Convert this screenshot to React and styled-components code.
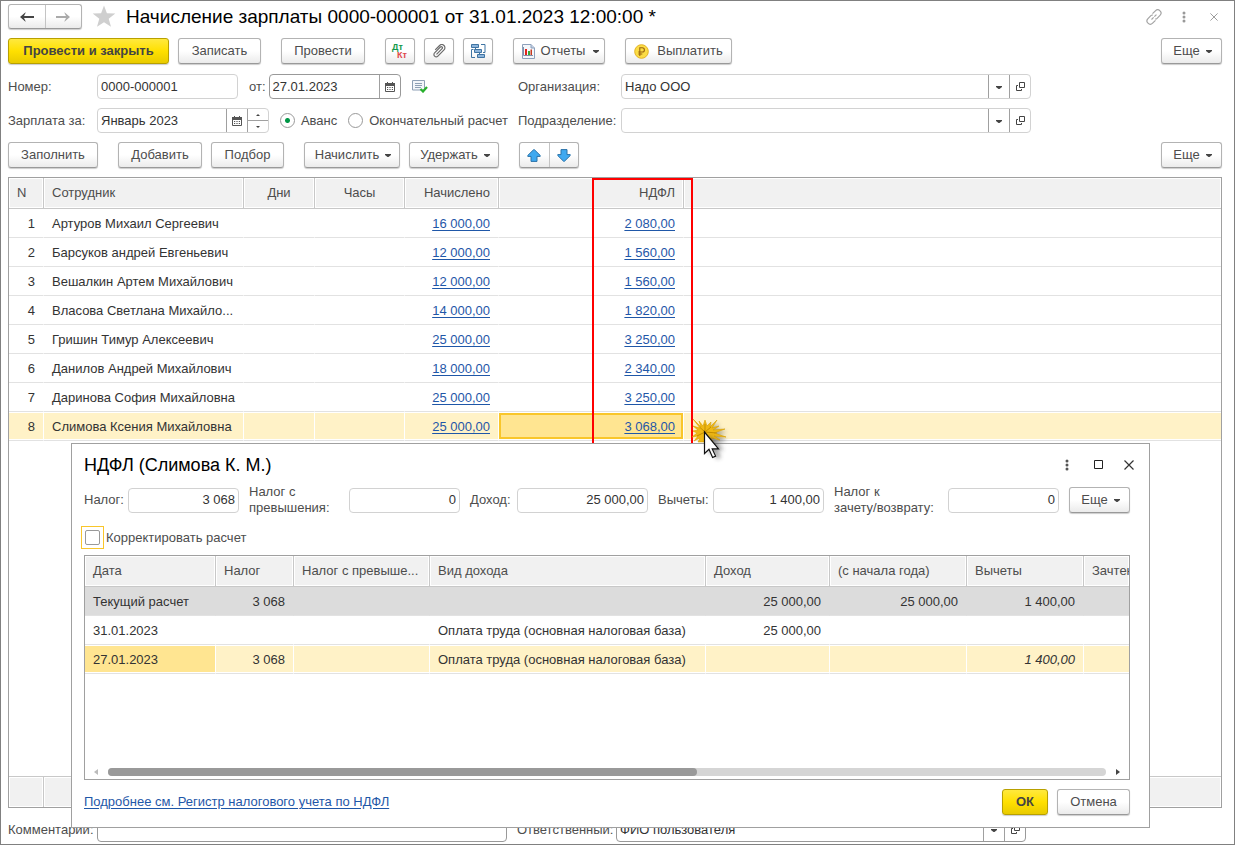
import React from "react"
import styled, { createGlobalStyle, css } from "styled-components"

const employees = [
  { name: "Артуров Михаил Сергеевич", accrued: "16 000,00", tax: "2 080,00" },
  { name: "Барсуков андрей Евгеньевич", accrued: "12 000,00", tax: "1 560,00" },
  { name: "Вешалкин Артем Михайлович", accrued: "12 000,00", tax: "1 560,00" },
  { name: "Власова Светлана Михайло...", accrued: "14 000,00", tax: "1 820,00" },
  { name: "Гришин Тимур Алексеевич", accrued: "25 000,00", tax: "3 250,00" },
  { name: "Данилов Андрей Михайлович", accrued: "18 000,00", tax: "2 340,00" },
  { name: "Даринова София Михайловна", accrued: "25 000,00", tax: "3 250,00" },
  {
    name: "Слимова Ксения Михайловна",
    accrued: "25 000,00",
    tax: "3 068,00",
    selected: true,
  },
]

const Caret = () => (
  <svg width="6" height="6" viewBox="0 0 6 6" aria-hidden="true">
    <path d="M0 2h6v1L3.500 5h-1L0 3z" fill="#444" />
  </svg>
)

const Arrow = ({ flip, color }) => (
  <svg width="14" height="10" viewBox="0 0 14 10" aria-hidden="true">
    <path
      d={
        flip
          ? "M14 5L8.500.3V1l1.500 3H0v2h10L8.500 9v.7z"
          : "M0 5L5.500.3V1L4 4h10v2H4l1.500 3v.7z"
      }
      fill={color}
    />
  </svg>
)

const Star = () => (
  <svg width="24" height="23" viewBox="0 0 24 23" aria-hidden="true">
    <path
      d="M12 .5l2.900 7.800 8.400.3-6.600 5.100 2.300 8.100-7-4.600-7 4.600 2.300-8.100L.7 8.600l8.400-.3z"
      fill="#cfcfcf"
    />
  </svg>
)

const LinkIcon = () => (
  <svg width="16" height="16" viewBox="0 0 16 16" aria-hidden="true">
    <g fill="none" stroke="#a3a3a3" strokeWidth="1.200">
      <path d="M6.500 4.700l2.900-2.900a3.100 3.100 0 0 1 4.600 4.600l-2.900 2.900c-.5.5-1.300.8-2 .6" />
      <path d="M9.500 11.300l-2.900 2.900A3.100 3.100 0 0 1 2 9.600l2.900-2.900c.5-.5 1.300-.8 2-.6" />
      <path d="M5.500 10.500l5-5" strokeDasharray="3 1" />
    </g>
  </svg>
)

const Dots = ({ color }) => (
  <svg width="4" height="12" viewBox="0 0 4 12" aria-hidden="true">
    <g fill={color}>
      <circle cx="2" cy="2" r="1.500" />
      <circle cx="2" cy="6" r="1.500" />
      <circle cx="2" cy="10" r="1.500" />
    </g>
  </svg>
)

const Cross = ({ size, color }) => (
  <svg width={size} height={size} viewBox="0 0 10 10" aria-hidden="true">
    <path d="M.5.5l9 9M9.500.5l-9 9" stroke={color} strokeWidth="1.200" />
  </svg>
)

const Square = () => (
  <svg width="9" height="9" viewBox="0 0 9 9" aria-hidden="true">
    <path d="M.5.5h8v8h-8z" fill="none" stroke="#222" />
  </svg>
)

const DebitCredit = () => (
  <svg width="18" height="18" viewBox="0 0 18 18" aria-hidden="true">
    <g fontFamily="Liberation Sans, sans-serif" fontSize="9" fontWeight="700">
      <text x="1" y="8" fill="#12994b">
        Дт
      </text>
      <text x="6" y="16" fill="#e0484a">
        Кт
      </text>
    </g>
  </svg>
)

const Clip = () => (
  <svg width="14" height="14" viewBox="0 0 14 14" aria-hidden="true">
    <path
      d="M4.500 10.300l5.600-5.600a1.200 1.200 0 0 0-1.700-1.700L2.600 8.800a2.300 2.300 0 0 0 3.300 3.300l6.100-6.200a3.100 3.100 0 0 0-4.400-4.400L3.200 5.900"
      fill="none"
      stroke="#6b6b6b"
      strokeWidth="1.200"
    />
  </svg>
)

const Structure = () => (
  <svg width="15" height="15" viewBox="0 0 15 15" aria-hidden="true">
    <g fill="#8db4da" stroke="#3f74a3">
      <path d="M.5.5h7v3h-7zM3.500 5.500h7v3h-7zM6.500 10.500h7v3h-7z" />
      <path
        d="M4.500 3.500v2M8.500 8.500v2M10 .5h4v8h-2M4 13.500H.5v-8h2"
        fill="none"
      />
    </g>
  </svg>
)

const Report = () => (
  <svg width="14" height="15" viewBox="0 0 14 15" aria-hidden="true">
    <path d="M1.500.5H10L13.500 4v10.500h-12z" fill="#f4f7fb" stroke="#8da0bb" />
    <path d="M10 .5V4h3.500" fill="#c3d0e4" stroke="#8da0bb" />
    <path d="M2.500 3v8.500H12" fill="none" stroke="#7f8fa8" />
    <path d="M4 5h2v6H4z" fill="#e3231c" />
    <path d="M7 7h2v4H7z" fill="#38a838" />
    <path d="M9.500 5.500H11V11H9.500z" fill="#c8391f" />
  </svg>
)

const Ruble = () => (
  <svg width="15" height="15" viewBox="0 0 15 15" aria-hidden="true">
    <circle cx="7.500" cy="7.500" r="6.800" fill="#fbdc45" stroke="#e3b224" />
    <path
      d="M5.800 12V3.800h2.500a2.100 2.100 0 0 1 0 4.200H4.300M4.300 10h4"
      fill="none"
      stroke="#9a6410"
      strokeWidth="1.100"
    />
  </svg>
)

const BlueArrow = ({ down }) => (
  <svg width="14" height="13" viewBox="0 0 14 13" aria-hidden="true">
    <path
      d={
        down
          ? "M4 .6h6v5h3.200v1L7.500 12.200h-1L.8 6.600v-1H4z"
          : "M4 12.400h6v-5h3.200v-1L7.500.8h-1L.8 6.400v1H4z"
      }
      fill="#3fa9f0"
      stroke="#2a72a8"
    />
  </svg>
)

const Calendar = () => (
  <svg width="10" height="10" viewBox="0 0 10 10" aria-hidden="true">
    <path d="M.5 1.500h9v8h-9z" fill="#fff" stroke="#555" />
    <path d="M0 1h10v3H0zM2 0h1v2H2zM7 0h1v2H7z" fill="#555" />
    <path
      d="M2 5.500h1.200M4.400 5.500h1.200M6.800 5.500H8M2 7.500h1.200M4.400 7.500h1.200M6.800 7.500H8"
      stroke="#555"
    />
  </svg>
)

const OpenIcon = () => (
  <svg width="9" height="9" viewBox="0 0 9 9" aria-hidden="true">
    <path d="M3.500.5h5v5h-5z" fill="none" stroke="#444" />
    <path d="M2 3.500H.5v5h5V7" fill="none" stroke="#444" />
  </svg>
)

const ListCheck = () => (
  <svg width="16" height="13" viewBox="0 0 16 13" aria-hidden="true">
    <path d="M.5.500h12v9.500H.5z" fill="#f3f6fa" stroke="#8ea0b5" />
    <path d="M3 3.500h7M3 5.500h7M3 7.500h6" stroke="#8ea0b5" />
    <path
      d="M8.500 9l2.500 2.500L15 7"
      fill="none"
      stroke="#27b02c"
      strokeWidth="2.200"
    />
  </svg>
)

const ClickPointer = () => (
  <svg width="44" height="50" viewBox="0 0 44 50" aria-hidden="true">
    <defs>
      <filter id="shade" x="-50%" y="-50%" width="200%" height="200%">
        <feGaussianBlur stdDeviation="2" />
      </filter>
    </defs>
    <path
      d="M16 8l12-2-5 5 12 3-9 3 9 5-8 3H14z"
      fill="#555"
      opacity=".5"
      filter="url(#shade)"
    />
    <path
      d="M1 1l8 8-2-6 4 5 2-6 2 6 4-4-1 5 7-7-5 8 7-2-6 4 12-1-11 4 12 4-12-1 6 4-9-2 2 4H6l2-4-6 3 4-5-6 1 5-4-4-2 5-1-5-4 7 2z"
      fill="#efb814"
      stroke="#d9a000"
      strokeWidth=".6"
    />
    <path d="M13 14L8 9.500M13 14v-8M13 14l6-5M13 14l-8 4M13 14l12 1" stroke="#c48f00" />
    <path
      d="M17 17v20l4-4 4 8 4-2-4-7h7z"
      fill="#333"
      opacity=".5"
      filter="url(#shade)"
    />
    <path
      d="M12.500 14v21.500l4.500-4.200 3.600 8.200 3-1.400-3.400-7.200h6.300z"
      fill="#fff"
      stroke="#111"
      strokeWidth="1.200"
    />
  </svg>
)

const OpenField = ({ id, label, value, strong }) => (
  <Field $strong={strong}>
    <FieldInput id={id} defaultValue={value} />
    <FieldButton aria-label={`${label}: список`}>
      <Caret />
    </FieldButton>
    <FieldButton aria-label={`${label}: открыть`}>
      <OpenIcon />
    </FieldButton>
  </Field>
)

const More = () => (
  <Button $menu $width={61}>
    Еще
    <Caret />
  </Button>
)

const TaxDialog = () => (
  <Dialog role="dialog" aria-labelledby="tax-title">
    <DialogHead>
      <Title as="h2" id="tax-title" $small>
        НДФЛ (Слимова К. М.)
      </Title>
      <WindowButtons>
        <IconButton aria-label="Меню">
          <Dots color="#555" />
        </IconButton>
        <IconButton aria-label="Развернуть">
          <Square />
        </IconButton>
        <IconButton aria-label="Закрыть">
          <Cross size="10" color="#333" />
        </IconButton>
      </WindowButtons>
    </DialogHead>
    <Totals>
      <label htmlFor="tax">Налог:</label>
      <Field>
        <FieldInput id="tax" $number defaultValue="3 068" />
      </Field>
      <label htmlFor="excess">
        Налог с<br />
        превышения:
      </label>
      <Field>
        <FieldInput id="excess" $number defaultValue="0" />
      </Field>
      <label htmlFor="income">Доход:</label>
      <Field>
        <FieldInput id="income" $number defaultValue="25 000,00" />
      </Field>
      <label htmlFor="deductions">Вычеты:</label>
      <Field>
        <FieldInput id="deductions" $number defaultValue="1 400,00" />
      </Field>
      <label htmlFor="offset">
        Налог к<br />
        зачету/возврату:
      </label>
      <Field>
        <FieldInput id="offset" $number defaultValue="0" />
      </Field>
      <More />
    </Totals>
    <CheckLabel>
      <CheckFrame>
        <Checkbox type="checkbox" />
      </CheckFrame>
      Корректировать расчет
    </CheckLabel>
    <TableFrame>
      <Table>
        <colgroup>
          <Col $width={131} />
          <Col $width={78} />
          <Col $width={136} />
          <Col $width={276} />
          <Col $width={124} />
          <Col $width={137} />
          <Col $width={117} />
          <Col />
        </colgroup>
        <thead>
          <tr>
            <Th>Дата</Th>
            <Th>Налог</Th>
            <Th>Налог с превыше...</Th>
            <Th>Вид дохода</Th>
            <Th>Доход</Th>
            <Th>(с начала года)</Th>
            <Th>Вычеты</Th>
            <Th>Зачтено</Th>
          </tr>
        </thead>
        <tbody>
          <Row $total>
            <Td>Текущий расчет</Td>
            <Td $align="right">3 068</Td>
            <Td />
            <Td />
            <Td $align="right">25 000,00</Td>
            <Td $align="right">25 000,00</Td>
            <Td $align="right">1 400,00</Td>
            <Td />
          </Row>
          <Row>
            <Td>31.01.2023</Td>
            <Td />
            <Td />
            <Td>Оплата труда (основная налоговая база)</Td>
            <Td $align="right">25 000,00</Td>
            <Td />
            <Td />
            <Td />
          </Row>
          <Row $selected>
            <Td $active>27.01.2023</Td>
            <Td $align="right">3 068</Td>
            <Td />
            <Td>Оплата труда (основная налоговая база)</Td>
            <Td />
            <Td />
            <Td $align="right">
              <em>1 400,00</em>
            </Td>
            <Td />
          </Row>
        </tbody>
      </Table>
      <Filler />
      <Scrollbar>
        <svg width="5" height="8" viewBox="0 0 5 8" aria-hidden="true">
          <path d="M5 1v6L1 4z" fill="#bbb" />
        </svg>
        <Track>
          <Thumb />
        </Track>
        <svg width="5" height="8" viewBox="0 0 5 8" aria-hidden="true">
          <path d="M0 1v6l4-3z" fill="#444" />
        </svg>
      </Scrollbar>
    </TableFrame>
    <DialogFoot>
      <Link href="#register">Подробнее см. Регистр налогового учета по НДФЛ</Link>
      <ButtonRow>
        <Button $primary $width={46}>
          ОК
        </Button>
        <Button $width={73}>Отмена</Button>
      </ButtonRow>
    </DialogFoot>
  </Dialog>
)

const App = () => {
  return (
    <Window>
      <GlobalStyle />
      <Header>
        <SplitButton>
          <button aria-label="Назад">
            <Arrow color="#444" />
          </button>
          <button aria-label="Вперед">
            <Arrow flip color="#aaa" />
          </button>
        </SplitButton>
        <IconButton aria-label="В избранное">
          <Star />
        </IconButton>
        <Title>Начисление зарплаты 0000-000001 от 31.01.2023 12:00:00 *</Title>
        <WindowButtons>
          <IconButton aria-label="Ссылка">
            <LinkIcon />
          </IconButton>
          <IconButton aria-label="Меню">
            <Dots color="#999" />
          </IconButton>
          <IconButton aria-label="Закрыть">
            <Cross size="8" color="#999" />
          </IconButton>
        </WindowButtons>
      </Header>

      <Toolbar>
        <ButtonRow>
          <Button $primary $width={161}>
            Провести и закрыть
          </Button>
          <Button $width={83}>Записать</Button>
        </ButtonRow>
        <Button $width={84}>Провести</Button>
        <ButtonRow>
          <Button $width={30} aria-label="Дт Кт">
            <DebitCredit />
          </Button>
          <Button $width={30} aria-label="Файлы">
            <Clip />
          </Button>
          <Button $width={30} aria-label="Структура">
            <Structure />
          </Button>
        </ButtonRow>
        <Button $menu $width={92}>
          <Report />
          Отчеты
          <Caret />
        </Button>
        <Button $width={107}>
          <Ruble />
          Выплатить
        </Button>
        <Spacer />
        <More />
      </Toolbar>

      <FormRow>
        <label htmlFor="number">Номер:</label>
        <Group>
          <Field $width={141}>
            <FieldInput id="number" defaultValue="0000-000001" />
          </Field>
          <DateGroup>
            <label htmlFor="date">от:</label>
            <Field $width={132} $strong>
              <FieldInput id="date" defaultValue="27.01.2023" />
              <FieldButton aria-label="Выбрать дату">
                <Calendar />
              </FieldButton>
            </Field>
          </DateGroup>
          <IconButton aria-label="Состояние">
            <ListCheck />
          </IconButton>
        </Group>
        <label htmlFor="company">Организация:</label>
        <OpenField id="company" label="Организация" value="Надо ООО" />
      </FormRow>
      <FormRow>
        <label htmlFor="month">Зарплата за:</label>
        <Group>
          <Field $width={173}>
            <FieldInput id="month" defaultValue="Январь 2023" />
            <FieldButton aria-label="Выбрать месяц">
              <Calendar />
            </FieldButton>
            <Spin>
              <button aria-label="Больше">
                <svg width="4" height="2" viewBox="0 0 4 2" aria-hidden="true">
                  <path d="M0 2h4L2 0z" fill="#444" />
                </svg>
              </button>
              <button aria-label="Меньше">
                <svg width="4" height="2" viewBox="0 0 4 2" aria-hidden="true">
                  <path d="M0 0h4L2 2z" fill="#444" />
                </svg>
              </button>
            </Spin>
          </Field>
          <RadioLabel>
            <Radio type="radio" name="kind" defaultChecked />
            Аванс
          </RadioLabel>
          <RadioLabel>
            <Radio type="radio" name="kind" />
            Окончательный расчет
          </RadioLabel>
        </Group>
        <label htmlFor="division">Подразделение:</label>
        <OpenField id="division" label="Подразделение" value="" />
      </FormRow>

      <Toolbar $table>
        <Button $width={90}>Заполнить</Button>
        <ButtonRow>
          <Button $width={84}>Добавить</Button>
          <Button $width={73}>Подбор</Button>
        </ButtonRow>
        <ButtonRow>
          <Button $menu $width={96}>
            Начислить
            <Caret />
          </Button>
          <Button $menu $width={90}>
            Удержать
            <Caret />
          </Button>
        </ButtonRow>
        <SplitButton $small>
          <button aria-label="Переместить вверх">
            <BlueArrow />
          </button>
          <button aria-label="Переместить вниз">
            <BlueArrow down />
          </button>
        </SplitButton>
        <Spacer />
        <More />
      </Toolbar>

      <TableFrame $main>
        <Table>
          <colgroup>
            <Col $width={35} />
            <Col $width={200} />
            <Col $width={71} />
            <Col $width={90} />
            <Col $width={94} />
            <Col $width={185} />
            <Col />
          </colgroup>
          <thead>
            <tr>
              <Th>N</Th>
              <Th>Сотрудник</Th>
              <Th $align="center">Дни</Th>
              <Th $align="center">Часы</Th>
              <Th $align="right">Начислено</Th>
              <Th $align="right">НДФЛ</Th>
              <Th />
            </tr>
          </thead>
          <tbody>
            {employees.map((item, index) => (
              <Row key={item.name} $selected={item.selected}>
                <Td $align="right">{index + 1}</Td>
                <Td>{item.name}</Td>
                <Td />
                <Td />
                <Td $align="right">
                  <Link href="#accrued">{item.accrued}</Link>
                </Td>
                <Td $align="right" $active={item.selected} $framed>
                  <Link href="#tax">{item.tax}</Link>
                </Td>
                <Td />
              </Row>
            ))}
          </tbody>
        </Table>
        <Filler />
        <FootStrip>
          <span />
          <span />
          <span />
          <span />
          <span />
          <span />
          <span />
        </FootStrip>
        <ColumnMark />
      </TableFrame>

      <BottomRow>
        <label htmlFor="comment">Комментарий:</label>
        <Field $strong>
          <FieldInput id="comment" />
        </Field>
        <label htmlFor="owner">Ответственный:</label>
        <OpenField
          id="owner"
          label="Ответственный"
          value="ФИО пользователя"
          strong
        />
      </BottomRow>

      <TaxDialog />
      <PointerMark>
        <ClickPointer />
      </PointerMark>
    </Window>
  )
}

const GlobalStyle = createGlobalStyle`
  * {
    box-sizing: border-box;
  }
  body {
    margin: 0;
    background: #fff;
    color: #4d4d4d;
    font-family: "Liberation Sans", Arial, sans-serif;
    font-size: 13px;
    line-height: 16px;
  }
  button,
  input {
    font: inherit;
    color: inherit;
  }
  svg {
    display: block;
    flex: none;
  }
  label {
    white-space: nowrap;
  }
`

const Window = styled.div`
  position: relative;
  display: flex;
  flex-direction: column;
  min-height: 100vh;
  padding: 3px 12px 2px 7px;
  border: 1px solid #808080;
  overflow: hidden;
`

const Header = styled.header`
  display: flex;
  align-items: center;
  gap: 10px;
  height: 25px;
`

const Title = styled.h1`
  margin: 0;
  color: #000;
  font-size: ${props => (props.$small ? "18px" : "19px")};
  font-weight: 400;
  line-height: 24px;
  white-space: nowrap;
`

const IconButton = styled.button`
  display: flex;
  align-items: center;
  justify-content: center;
  min-width: 16px;
  padding: 0;
  border: 0;
  background: none;
`

const WindowButtons = styled.div`
  display: flex;
  gap: 14px;
  margin-left: auto;
`

const raised = css`
  border: 1px solid #b3b3b3;
  border-bottom-color: #999;
  border-radius: 3px;
  background: linear-gradient(#fff 50%, #ebebeb);
  box-shadow: 0 1px 1px rgba(0, 0, 0, 0.2);
`

const Button = styled.button`
  ${raised}
  display: flex;
  align-items: center;
  justify-content: center;
  gap: ${props => (props.$menu ? "6px" : "8px")};
  width: ${props => props.$width}px;
  height: 26px;
  padding: ${props => (props.$menu ? "0 5px 0 7px" : "0")};
  white-space: nowrap;

  svg:last-child:not(:first-child) {
    margin-left: ${props => (props.$menu ? "2px" : "0")};
  }

  ${props =>
    props.$primary &&
    css`
      border-color: #b8a000;
      background: linear-gradient(#ffe93e, #ffe000 50%, #e9cb00);
      color: #444;
      font-weight: 700;
    `}
`

const SplitButton = styled.div`
  ${raised}
  display: flex;
  width: ${props => (props.$small ? "60px" : "74px")};
  height: ${props => (props.$small ? "26px" : "25px")};

  button {
    display: flex;
    flex: 1;
    align-items: center;
    justify-content: center;
    padding: 0;
    border: 0;
    background: none;
  }
  button + button {
    border-left: 1px solid #c4c4c4;
  }
`

const Toolbar = styled.div`
  display: flex;
  gap: 20px;
  margin: ${props => (props.$table ? "0 0 9px" : "9px 0 10px")};
`

const ButtonRow = styled.div`
  display: flex;
  gap: 9px;
`

const Spacer = styled.div`
  flex: 1;
`

const FormRow = styled.div`
  display: grid;
  grid-template-columns: 89px 411px 10px 103px minmax(200px, 410px);
  align-items: center;
  margin-bottom: 9px;

  > :nth-child(3) {
    grid-column: 4;
  }
`

const BottomRow = styled.div`
  display: grid;
  grid-template-columns: 89px 410px 10px 99px minmax(200px, 410px);
  align-items: center;
  margin-top: 9px;

  > :nth-child(3) {
    grid-column: 4;
  }
`

const Group = styled.div`
  display: flex;
  align-items: center;
  gap: 11px;
`

const DateGroup = styled.div`
  display: flex;
  align-items: center;
  gap: 3px;
`

const Field = styled.div`
  display: flex;
  width: ${props => (props.$width ? `${props.$width}px` : "auto")};
  height: 25px;
  min-width: 0;
  border: 1px solid ${props => (props.$strong ? "#999" : "#d2d2d2")};
  border-radius: 4px;
  background: #fff;
`

const FieldInput = styled.input`
  flex: 1;
  width: 0;
  min-width: 0;
  padding: 0 3px;
  border: 0;
  background: none;
  color: #333;
  outline: 0;
  text-align: ${props => (props.$number ? "right" : "left")};
`

const FieldButton = styled.button`
  display: flex;
  align-items: center;
  justify-content: center;
  width: 21px;
  padding: 0;
  border: 0;
  border-left: 1px solid #a0a0a0;
  background: none;
`

const Spin = styled.div`
  display: flex;
  flex-direction: column;
  width: 21px;
  border-left: 1px solid #a0a0a0;

  button {
    display: flex;
    flex: 1;
    align-items: center;
    justify-content: center;
    padding: 0;
    border: 0;
    background: none;
  }
  button + button {
    border-top: 1px solid #a0a0a0;
  }
`

const RadioLabel = styled.label`
  display: flex;
  align-items: center;
  gap: 6px;
`

const Radio = styled.input`
  appearance: none;
  width: 15px;
  height: 15px;
  margin: 0;
  border: 1px solid #999;
  border-radius: 50%;
  background: #fff;

  &:checked {
    background: radial-gradient(#009646 2px, #fff 3px);
  }
`

const TableFrame = styled.div`
  position: relative;
  display: flex;
  flex: 1;
  flex-direction: column;
  border: 1px solid #a0a0a0;
  background: #fff;
  overflow: ${props => (props.$main ? "visible" : "hidden")};
`

const Table = styled.table`
  width: 100%;
  table-layout: fixed;
  border-collapse: separate;
  border-spacing: 0;
`

const Col = styled.col`
  width: ${props => (props.$width ? `${props.$width}px` : "auto")};
`

const Th = styled.th`
  height: 31px;
  padding: 0 8px;
  border-right: 1px solid #c8c8c8;
  border-bottom: 1px solid #c8c8c8;
  background: #f1f1f1;
  box-shadow: inset 0 0 0 1px #fff;
  font-weight: 400;
  text-align: ${props => props.$align || "left"};
  white-space: nowrap;
  overflow: hidden;

  &:last-child {
    border-right: 0;
  }
`

const Td = styled.td`
  height: 29px;
  padding: 2px 8px 0;
  border-right: 1px solid transparent;
  border-bottom: 1px solid #e2e2e2;
  color: #333;
  text-align: ${props => props.$align || "left"};
  white-space: nowrap;
  overflow: hidden;

  &:last-child {
    border-right: 0;
  }

  ${props =>
    props.$active &&
    css`
      &&& {
        background: #ffe591;
      }
    `}
  ${props =>
    props.$active &&
    props.$framed &&
    css`
      &&& {
        box-shadow: inset 0 1px #fff, inset 0 -1px #fff, inset 0 3px #f9c62a,
          inset 0 -3px #f9c62a, inset 2px 0 #f9c62a, inset -2px 0 #f9c62a;
      }
    `}
`

const Row = styled.tr`
  ${props =>
    props.$total &&
    css`
      background: #dcdcdc;
    `}
  ${props =>
    props.$selected &&
    css`
      ${Td} {
        border-right-color: #fff;
        background: #fff2c7;
        box-shadow: inset 0 1px #fff, inset 0 -1px #fff;
      }
    `}
`

const Link = styled.a`
  color: #1f57a8;
  text-decoration: underline;
  text-underline-offset: 2px;
`

const Filler = styled.div`
  flex: 1;
`

const FootStrip = styled.div`
  display: grid;
  grid-template-columns: 35px 200px 71px 90px 94px 185px 1fr;
  height: 31px;
  border-top: 1px solid #c8c8c8;

  span {
    border-right: 1px solid #c8c8c8;
    background: #f1f1f1;
    box-shadow: inset 0 0 0 1px #fff;
  }
  span:last-child {
    border-right: 0;
  }
`

/* red frame round the tax column, it runs down behind the dialog */
const ColumnMark = styled.div`
  position: absolute;
  top: 0;
  left: 583px;
  width: 101px;
  height: 300px;
  border: 2px solid #f00;
  pointer-events: none;
`

const PointerMark = styled.div`
  position: absolute;
  z-index: 2;
  top: 417px;
  left: 691px;
  pointer-events: none;
`

const Dialog = styled.section`
  position: absolute;
  z-index: 1;
  top: 442px;
  right: 84px;
  left: 70px;
  display: flex;
  flex-direction: column;
  height: 385px;
  padding: 8px 19px 12px 12px;
  border: 1px solid #a0a0a0;
  background: #fff;
`

const DialogHead = styled.div`
  display: flex;
  align-items: center;
  height: 25px;

  ${WindowButtons} {
    gap: 15px;
    margin-right: -7px;
  }
`

const Totals = styled.div`
  display: grid;
  grid-template-columns: 34px 111px 90px 111px 37px 131px 45px 111px 104px 111px 61px;
  column-gap: 10px;
  align-items: center;
  margin: 7px 0 10px;
`

const CheckLabel = styled.label`
  display: flex;
  align-items: center;
  gap: 2px;
  margin: 0 0 6px -3px;
`

const CheckFrame = styled.span`
  padding: 3px;
  border: 1px solid #f9c62a;
`

const Checkbox = styled.input`
  display: block;
  appearance: none;
  width: 15px;
  height: 15px;
  margin: 0;
  border: 1px solid #999;
  border-radius: 2px;
`

const Scrollbar = styled.div`
  display: flex;
  align-items: center;
  gap: 10px;
  padding: 3px 8px;
`

const Track = styled.div`
  flex: 1;
  height: 8px;
  border-radius: 4px;
  background: #d5d5d5;
`

const Thumb = styled.div`
  width: 59%;
  height: 100%;
  border-radius: 4px;
  background: #999;
`

const DialogFoot = styled.div`
  display: flex;
  align-items: center;
  justify-content: space-between;
  margin-top: 9px;
`

export default App
